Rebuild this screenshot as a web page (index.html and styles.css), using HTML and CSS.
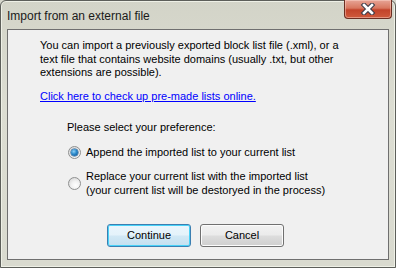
FILE: index.html
```html
<!DOCTYPE html>
<html>
<head>
<meta charset="utf-8">
<link rel="stylesheet" href="styles.css">
</head>
<body>
<div class="window">
  <div class="titlebar">
    <span class="title">Import from an external file</span>
    <button class="close" aria-label="Close">
      <svg width="16" height="12" viewBox="0 0 16 12">
        <path d="M4 2 L12 10 M12 2 L4 10" stroke="#3b3b48" stroke-width="4.6" stroke-linecap="square" fill="none"/>
        <path d="M4 2 L12 10 M12 2 L4 10" stroke="#ffffff" stroke-width="2.6" stroke-linecap="square" fill="none"/>
      </svg>
    </button>
  </div>
  <div class="client">
    <p class="intro">You can import a previously exported block list file (.xml), or a text file that contains website domains (usually .txt, but other extensions are possible).</p>
    <a class="link" href="#">Click here to check up pre-made lists online.</a>
    <div class="prefs">
      <p class="prompt">Please select your preference:</p>
      <label class="option">
        <span class="radio checked"></span>
        <span>Append the imported list to your current list</span>
      </label>
      <label class="option">
        <span class="radio"></span>
        <span>Replace your current list with the imported list<br>(your current list will be destoryed in the process)</span>
      </label>
    </div>
    <div class="buttons">
      <button class="btn default">Continue</button>
      <button class="btn">Cancel</button>
    </div>
  </div>
</div>
</body>
</html>
```

FILE: styles.css
```css
html, body {
  margin: 0;
  padding: 0;
  background: #d6d7cc;
}
body {
  width: 396px;
  height: 268px;
  overflow: hidden;
  font-family: "Liberation Sans", Arial, sans-serif;
  font-size: 11px;
  color: #000;
}
.window {
  box-sizing: border-box;
  width: 396px;
  height: 268px;
  border: 1px solid #5d5f5a;
  border-radius: 6px 6px 0 0;
  background: linear-gradient(to bottom, #d3d4c8 0%, #dcddd2 40%, #d9dacf 100%);
  box-shadow: inset 0 0 0 1px #eef0e6;
  display: flex;
  flex-direction: column;
}
.titlebar {
  height: 27px;
  display: flex;
  align-items: flex-start;
  justify-content: space-between;
  padding-left: 6px;
}
.title {
  margin-top: 8px;
  color: #1a1a1a;
  font-size: 12px;
}
.close {
  width: 48px;
  height: 19px;
  margin: -1px 3px 0 0;
  padding: 0;
  border: 1px solid #6b2e22;
  border-top: none;
  border-radius: 0 0 4px 4px;
  background: linear-gradient(to bottom, #e7a596 0%, #d8775f 45%, #c2432a 55%, #cf5a3c 100%);
  box-shadow: inset 0 0 0 1px rgba(255,220,210,0.45);
  display: flex;
  align-items: center;
  justify-content: center;
}
.close svg { display: block; }
.client {
  flex: 1;
  margin: 1px 6px 7px 6px;
  border: 1px solid #6f6f6f;
  background: #f0f0f0;
  display: flex;
  flex-direction: column;
  padding: 9px 20px 0 32px;
}
.intro {
  margin: 0;
  line-height: 13.5px;
  width: 302px;
}
.link {
  margin-top: 9px;
  color: #0000ff;
  line-height: 14px;
  align-self: flex-start;
}
.prefs {
  margin-top: 17px;
  padding-left: 27px;
  display: flex;
  flex-direction: column;
}
.prompt {
  margin: 0;
  line-height: 14px;
}
.option {
  display: flex;
  align-items: center;
  gap: 5px;
  line-height: 13.7px;
  margin-top: 12px;
}
.option + .option { margin-top: 11px; }
.radio {
  box-sizing: border-box;
  width: 13px;
  height: 13px;
  border-radius: 50%;
  border: 1px solid #8f9090;
  background: radial-gradient(circle at 60% 65%, #ffffff 0%, #f2f2f2 40%, #cfcfcf 100%);
  flex: none;
  margin-left: 1px;
  display: flex;
  align-items: center;
  justify-content: center;
}
.radio.checked::after {
  content: "";
  width: 7px;
  height: 7px;
  border-radius: 50%;
  background: radial-gradient(circle at 40% 35%, #8fd2f7 0%, #2b88c9 45%, #0d4d8c 100%);
  box-shadow: 0 0 0 0.5px #1b4f80;
}
.buttons {
  display: flex;
  gap: 9px;
  margin-top: 26px;
  margin-left: 67px;
}
.btn {
  box-sizing: border-box;
  width: 84px;
  height: 23px;
  border: 1px solid #707070;
  border-radius: 3px;
  background: linear-gradient(to bottom, #f2f2f2 0%, #ebebeb 48%, #dddddd 52%, #cfcfcf 100%);
  box-shadow: inset 0 0 0 1px #fcfcfc;
  font-family: "Liberation Sans", Arial, sans-serif;
  font-size: 11px;
  color: #000;
  padding: 0;
}
.btn.default {
  border-color: #3c7fb1;
  box-shadow: inset 0 0 0 1px #48d2f8;
  background: linear-gradient(to bottom, #eaf6fd 0%, #e4f2fa 48%, #d1e8f5 52%, #c4e0f0 100%);
}
```
